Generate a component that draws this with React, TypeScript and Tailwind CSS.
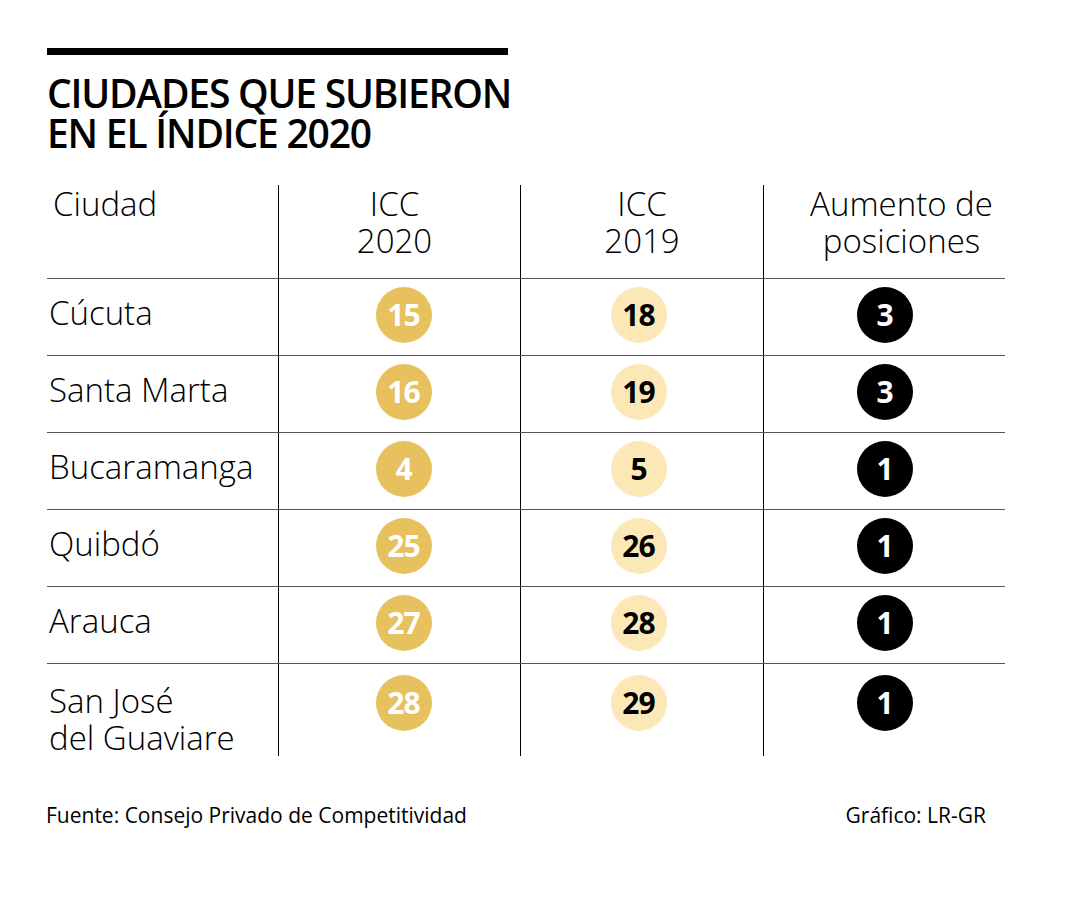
const rows = [
  { city: ["Cúcuta"], a: 15, b: 18, up: 3 },
  { city: ["Santa Marta"], a: 16, b: 19, up: 3 },
  { city: ["Bucaramanga"], a: 4, b: 5, up: 1 },
  { city: ["Quibdó"], a: 25, b: 26, up: 1 },
  { city: ["Arauca"], a: 27, b: 28, up: 1 },
  { city: ["San José", "del Guaviare"], a: 28, b: 29, up: 1 },
];

function Dot({ value, tone }: { value: number; tone: "gold" | "light" | "dark" }) {
  const colors = {
    gold: "bg-[#e6c15e] text-white",
    light: "bg-[#fbe8b6] text-black",
    dark: "bg-black text-white",
  }[tone];
  return (
    <div
      className={`flex h-[56px] w-[56px] items-center justify-center rounded-full text-[30px] font-bold leading-none tracking-[-1px] ${colors}`}
    >
      {value}
    </div>
  );
}

export default function App() {
  return (
    <div
      className="h-[900px] w-[1080px] bg-white text-black"
      style={{ fontFamily: '"Open Sans", "Noto Sans", sans-serif' }}
    >
      <div className="px-[47px] pt-[48px]">
        <div className="h-[7px] w-[461px] bg-black" />
        <h1 className="mt-[18px] text-[39px] font-semibold leading-[40px] tracking-[-1.2px]">
          CIUDADES QUE SUBIERON
          <br />
          EN EL ÍNDICE 2020
        </h1>

        <div className="mt-[32px] w-[958px]">
          <div className="grid h-[93px] grid-cols-[231px_242px_243px_242px] text-[33px] font-light leading-[37px]">
            <div className="pl-[6px]">Ciudad</div>
            <div className="border-l border-black pr-[10px] text-center">
              ICC
              <br />
              2020
            </div>
            <div className="border-l border-black text-center">
              ICC
              <br />
              2019
            </div>
            <div className="border-l border-black pl-[34px] text-center">
              Aumento de
              <br />
              posiciones
            </div>
          </div>

          {rows.map((row, i) => {
            const last = i === rows.length - 1;
            const cell = last ? "items-start pt-[11px]" : "items-center pb-[5px]";
            return (
              <div
                key={row.city.join(" ")}
                className={`grid grid-cols-[231px_242px_243px_242px] border-t border-[#555] ${
                  last ? "h-[87px]" : "h-[77px]"
                }`}
              >
                <div
                  className={`pl-[2px] text-[33px] font-light leading-[37px] ${
                    last ? "pt-[18px]" : "flex items-center pb-[9px]"
                  }`}
                >
                  <div>
                    {row.city.map((line) => (
                      <div key={line}>{line}</div>
                    ))}
                  </div>
                </div>
                <div className={`flex justify-center border-l border-black pl-[8px] ${cell}`}>
                  <Dot value={row.a} tone="gold" />
                </div>
                <div className={`flex justify-center border-l border-black pr-[7px] ${cell}`}>
                  <Dot value={row.b} tone="light" />
                </div>
                <div className={`flex justify-center border-l border-black ${cell}`}>
                  <Dot value={row.up} tone="dark" />
                </div>
              </div>
            );
          })}
        </div>

        <div className="mt-[51px] flex w-[939px] justify-between text-[21px] leading-[28px]">
          <span className="-ml-[1px]">Fuente: Consejo Privado de Competitividad</span>
          <span>Gráfico: LR-GR</span>
        </div>
      </div>
    </div>
  );
}
